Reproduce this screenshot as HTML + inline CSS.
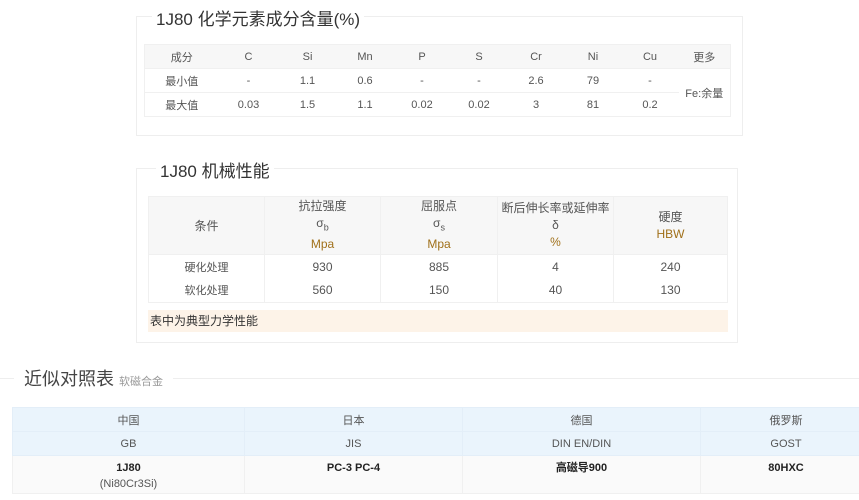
<!DOCTYPE html>
<html><head><meta charset="utf-8"><style>
*{margin:0;padding:0;box-sizing:border-box}
body{width:859px;height:500px;background:#fff;font-family:"Liberation Sans","Noto Sans CJK SC",sans-serif;color:#555;position:relative;overflow:hidden}
.box{position:absolute;border:1px solid #eee}
.ttl{position:absolute;background:#fff;padding:0 4px;font-size:17px;color:#333}
table{position:absolute;border-collapse:collapse;font-size:11px;text-align:center}
td{border:1px solid #f0f0f0;color:#555}
.h td{background:#f7f7f7}
.o{color:#a0701a}
.t1 td{border-left:none;border-right:none}
</style></head><body>

<div class="box" style="left:136px;top:16px;width:607px;height:120px"></div>
<div class="ttl" style="left:152px;top:5px">1J80 化学元素成分含量(%)</div>
<table class="t1" style="left:144px;top:44px;width:587px;border:1px solid #f0f0f0">
<tr class="h" style="height:24px"><td style="width:74px">成分</td><td style="width:60px">C</td><td style="width:58px">Si</td><td style="width:57px">Mn</td><td style="width:57px">P</td><td style="width:57px">S</td><td style="width:57px">Cr</td><td style="width:57px">Ni</td><td style="width:57px">Cu</td><td>更多</td></tr>
<tr style="height:24px"><td>最小值</td><td>-</td><td>1.1</td><td>0.6</td><td>-</td><td>-</td><td>2.6</td><td>79</td><td>-</td><td rowspan="2">Fe:余量</td></tr>
<tr style="height:24px"><td>最大值</td><td>0.03</td><td>1.5</td><td>1.1</td><td>0.02</td><td>0.02</td><td>3</td><td>81</td><td>0.2</td></tr>
</table>

<div class="box" style="left:136px;top:168px;width:602px;height:175px"></div>
<div class="ttl" style="left:156px;top:157px">1J80 机械性能</div>
<table style="left:148px;top:196px;width:580px;font-size:12px">
<tr class="h" style="height:58px"><td style="width:116px">条件</td><td style="width:116px;line-height:17px">抗拉强度<br>σ<sub style="font-size:9px">b</sub><br><span class="o">Mpa</span></td><td style="width:117px;line-height:17px">屈服点<br>σ<sub style="font-size:9px">s</sub><br><span class="o">Mpa</span></td><td style="width:116px;line-height:17px">断后伸长率或延伸率<br>δ<br><span class="o">%</span></td><td style="line-height:17px">硬度<br><span class="o">HBW</span></td></tr>
<tr style="height:24px"><td style="font-size:11px;border-bottom:none">硬化处理</td><td style="border-bottom:none">930</td><td style="border-bottom:none">885</td><td style="border-bottom:none">4</td><td style="border-bottom:none">240</td></tr>
<tr style="height:24px"><td style="font-size:11px;border-top:none">软化处理</td><td style="border-top:none">560</td><td style="border-top:none">150</td><td style="border-top:none">40</td><td style="border-top:none">130</td></tr>
</table>
<div style="position:absolute;left:148px;top:310px;width:580px;height:22px;background:#fdf3e8;font-size:12px;color:#333;line-height:22px;padding-left:2px">表中为典型力学性能</div>

<div style="position:absolute;left:0;top:378px;width:859px;height:1px;background:#eee"></div>
<div style="position:absolute;left:14px;top:365px;background:#fff;padding:0 10px;font-size:18px;color:#444;white-space:nowrap">近似对照表 <span style="font-size:11px;color:#999">软磁合金</span></div>
<table style="left:12px;top:407px;width:860px">
<tr style="height:24px;background:#eaf4fc"><td style="width:232px;border-color:#e3eef8">中国</td><td style="width:218px;border-color:#e3eef8">日本</td><td style="width:238px;border-color:#e3eef8">德国</td><td style="border-color:#e3eef8">俄罗斯</td></tr>
<tr style="height:24px;background:#eaf4fc"><td style="border-color:#e3eef8">GB</td><td style="border-color:#e3eef8">JIS</td><td style="border-color:#e3eef8">DIN EN/DIN</td><td style="border-color:#e3eef8">GOST</td></tr>
<tr style="height:38px;background:#fafafa;vertical-align:top"><td style="color:#222;padding-top:4px;line-height:16px"><b>1J80</b><br><span style="color:#555">(Ni80Cr3Si)</span></td><td style="padding-top:4px;color:#222;line-height:16px"><b>PC-3 PC-4</b></td><td style="padding-top:4px;color:#222;line-height:16px"><b>高磁导900</b></td><td style="padding-top:4px;color:#222;line-height:16px"><b>80HXC</b></td></tr>
</table>
</body></html>
